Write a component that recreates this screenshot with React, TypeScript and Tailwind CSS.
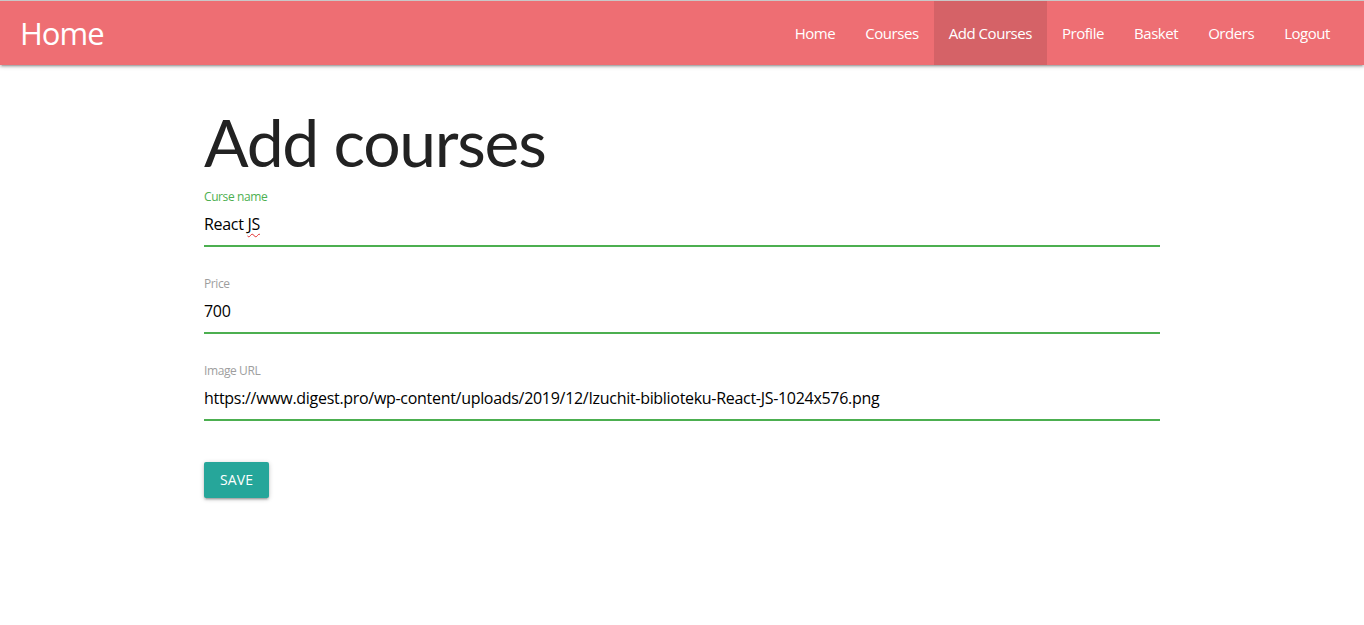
import React from "react";

const links = ["Home", "Courses", "Add Courses", "Profile", "Basket", "Orders", "Logout"];

const Field = ({ label, active, children }: { label: string; active?: boolean; children: React.ReactNode }) => {
	return (
		<div className="h-[87px] flex flex-col">
			<div className={`text-[12px] leading-[14px] h-[14px] tracking-[-0.4px] ${active ? "text-[#4caf50]" : "text-[#9e9e9e]"}`}>{label}</div>
			<div className="text-[16px] leading-[20px] h-[20px] mt-[10px] text-black tracking-[-0.3px] whitespace-nowrap">{children}</div>
			<div className="mt-[11px] h-[2px] bg-[#4caf50]"></div>
		</div>
	);
};

export default function App() {
	return (
		<div className="min-h-[625px] bg-white font-['Open_Sans',sans-serif] text-[#222]">
			<nav className="border-t border-[#c8c8c8] h-[65px] bg-[#ee6e73] shadow-[0_2px_2px_0_rgba(0,0,0,0.14),0_3px_1px_-2px_rgba(0,0,0,0.12),0_1px_5px_0_rgba(0,0,0,0.2)] flex items-stretch justify-between pl-[20px] pr-[19px] relative z-10">
				<a className="text-white text-[31px] leading-[64px] tracking-[-1px]">Home</a>
				<ul className="flex">
					{links.map((l) => (
						<li key={l} className={`px-[15px] text-white text-[15px] leading-[64px] tracking-[-0.45px] ${l === "Add Courses" ? "bg-black/10" : ""}`}>
							{l}
						</li>
					))}
				</ul>
			</nav>
			<div className="w-[956px] mx-auto">
				<h1 className="font-['Lato',sans-serif] text-[66px] leading-[74px] mt-[40px] mb-[11px] font-normal tracking-[-1.3px]">Add courses</h1>
				<Field label="Curse name" active>
					React <span className="underline decoration-wavy decoration-[#e03030] decoration-1 underline-offset-[3px]">JS</span>
				</Field>
				<Field label="Price">700</Field>
				<Field label="Image URL">https://www.digest.pro/wp-content/uploads/2019/12/Izuchit-biblioteku-React-JS-1024x576.png</Field>
				<button className="mt-[11px] h-[36px] px-[16px] rounded-[2px] bg-[#26a69a] text-white text-[14px] leading-[36px] uppercase tracking-[0.1px] shadow-[0_2px_2px_0_rgba(0,0,0,0.14),0_3px_1px_-2px_rgba(0,0,0,0.12),0_1px_5px_0_rgba(0,0,0,0.2)]">
					Save
				</button>
			</div>
		</div>
	);
}
